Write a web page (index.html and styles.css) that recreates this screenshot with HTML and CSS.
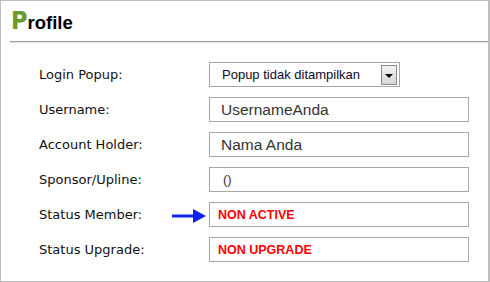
FILE: index.html
```html
<!DOCTYPE html>
<html lang="en">
<head>
    <meta charset="UTF-8">
    <meta name="viewport" content="width=device-width, initial-scale=1.0">
    <title>Profile</title>
    <link rel="stylesheet" href="styles.css">
</head>
<body>
    <div class="panel">
        <h1 class="panel-title"><span class="big-letter">P</span>rofile</h1>

        <div class="profile-form">
            <label class="field-label">Login Popup:</label>
            <div class="select-box">
                <span class="select-text">Popup tidak ditampilkan</span>
                <span class="select-button"><span class="select-arrow"></span></span>
            </div>

            <label class="field-label">Username:</label>
            <div class="text-box">UsernameAnda</div>

            <label class="field-label">Account Holder:</label>
            <div class="text-box">Nama Anda</div>

            <label class="field-label">Sponsor/Upline:</label>
            <div class="text-box small-text">()</div>

            <label class="field-label">Status Member:</label>
            <div class="text-box status-text">
                <svg class="pointer-arrow" width="34" height="16" viewBox="0 0 34 16">
                    <rect x="0" y="6.5" width="23" height="3" fill="#1020ea"/>
                    <polygon points="21,1 34,8 21,15" fill="#1020ea"/>
                </svg>
                NON ACTIVE
            </div>

            <label class="field-label">Status Upgrade:</label>
            <div class="text-box status-text">NON UPGRADE</div>
        </div>
    </div>
</body>
</html>
```

FILE: styles.css
```css
body {
    margin: 0;
    background-color: #fff;
}
.panel {
    box-sizing: border-box;
    width: 490px;
    height: 282px;
    border: 1px solid #bdbdbd;
    border-right-width: 2px;
}
.panel-title {
    box-sizing: border-box;
    height: 41px;
    margin: 0 0 0 9px;
    padding: 7px 0 0 1px;
    border-bottom: 1px solid #9c9c9c;
    box-shadow: 0 1px 0 #e8e8e8;
    font-family: "Liberation Sans", Arial, sans-serif;
    font-size: 18.5px;
    font-weight: bold;
    line-height: 25px;
    color: #000;
}
.big-letter {
    font-family: "Liberation Sans Narrow", "DejaVu Sans Condensed", sans-serif;
    font-size: 25px;
    color: #689a2c;
}
.profile-form {
    display: grid;
    grid-template-columns: 170px 260px;
    grid-auto-rows: 25px;
    row-gap: 10px;
    margin-top: 20px;
    padding-left: 38px;
}
.field-label {
    display: flex;
    align-items: center;
    font-family: "DejaVu Sans", Verdana, sans-serif;
    font-size: 13px;
    color: #111;
}
.select-box {
    box-sizing: border-box;
    width: 191px;
    display: flex;
    align-items: center;
    justify-content: space-between;
    padding: 0 2px 0 12px;
    border: 1px solid #a6a6a6;
    font-family: "Liberation Sans", Arial, sans-serif;
    font-size: 13px;
    color: #0a0a2a;
}
.select-button {
    box-sizing: border-box;
    width: 16px;
    height: 20px;
    display: flex;
    align-items: center;
    justify-content: center;
    border: 1px solid #8a8a8a;
    background: linear-gradient(#f2f2f2, #d6d6d6);
}
.select-arrow {
    width: 0;
    height: 0;
    border-left: 4px solid transparent;
    border-right: 4px solid transparent;
    border-top: 4px solid #000;
    margin-top: 2px;
}
.text-box {
    position: relative;
    box-sizing: border-box;
    display: flex;
    align-items: center;
    padding-left: 11px;
    border: 1px solid #a8a8a8;
    font-family: "Liberation Sans", Arial, sans-serif;
    font-size: 15.5px;
    color: #333;
}
.small-text {
    padding-left: 13px;
    font-size: 13px;
}
.status-text {
    padding-left: 8px;
    font-size: 12.5px;
    font-weight: bold;
    color: #f00;
}
.pointer-arrow {
    position: absolute;
    left: -38px;
    top: 50%;
    margin-top: -7px;
}
```
